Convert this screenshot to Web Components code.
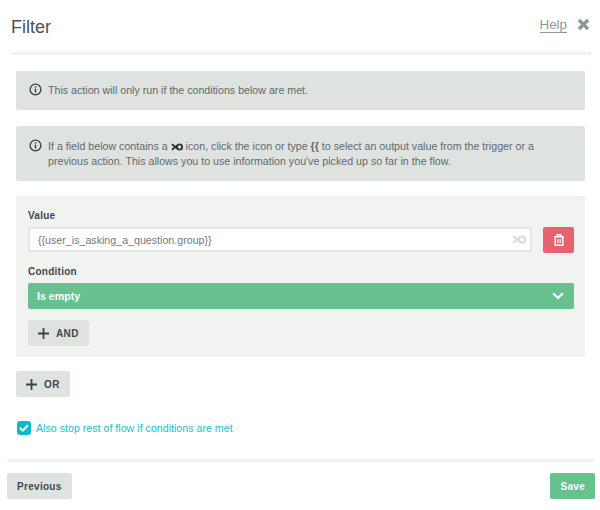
<!DOCTYPE html>
<html>
<head>
<meta charset="utf-8">
<style>
  html, body { margin: 0; background: #fff; }
  body { font-family: "Liberation Sans", Arial, sans-serif; color: #4a5157; }
</style>
</head>
<body>
<filter-dialog></filter-dialog>

<script>
// small shared icons
const loopIcon = (color, w, h) => `<svg width="${w}" height="${h}" viewBox="0 0 14 9" style="display:block"><path d="M1 1.2 L5.2 4.5 L1 7.8" fill="none" stroke="${color}" stroke-width="2.2"/><path d="M5.2 4.5 L7.5 2.6" fill="none" stroke="${color}" stroke-width="2.2"/><path d="M5.2 4.5 L7.5 6.4" fill="none" stroke="${color}" stroke-width="2.2"/><circle cx="10" cy="4.5" r="3" fill="none" stroke="${color}" stroke-width="2.2"/></svg>`;
const infoIcon = `<svg width="13" height="13" viewBox="0 0 13 13" style="display:block"><circle cx="6.5" cy="6.5" r="5.4" fill="none" stroke="#3b4248" stroke-width="1.3"/><rect x="5.8" y="5.6" width="1.4" height="4" fill="#3b4248"/><rect x="5.8" y="3.2" width="1.4" height="1.4" fill="#3b4248"/></svg>`;
const plusIcon = `<svg width="11" height="11" viewBox="0 0 11 11" style="display:block"><path d="M5.5 0 V11 M0 5.5 H11" stroke="#3b4248" stroke-width="1.8" fill="none"/></svg>`;

class InfoBox extends HTMLElement {
  constructor() {
    super();
    this.attachShadow({ mode: 'open' });
    this.shadowRoot.innerHTML = `
      <style>
        :host {
          display: flex;
          align-items: flex-start;
          background-color: #dfe3e0;
          border-radius: 2px;
          padding: 12px 40px 12px 13px;
          font-size: 10.66px;
          line-height: 15px;
          color: #62696e;
        }
        .icon { flex: none; width: 19px; }
      </style>
      <div class="icon">${infoIcon}</div>
      <div><slot></slot></div>
    `;
  }
}

class AddButton extends HTMLElement {
  constructor() {
    super();
    this.attachShadow({ mode: 'open' });
    this.shadowRoot.innerHTML = `
      <style>
        :host {
          display: inline-flex;
          align-items: center;
          gap: 7px;
          height: 26px;
          padding: 0 10px;
          background-color: #dfe3e0;
          border-radius: 2px;
          font-size: 10px;
          font-weight: bold;
          letter-spacing: .4px;
          color: #41484e;
        }
      </style>
      ${plusIcon}<slot></slot>
    `;
  }
}

class ActionButton extends HTMLElement {
  constructor() {
    super();
    this.attachShadow({ mode: 'open' });
    this.shadowRoot.innerHTML = `
      <style>
        :host {
          display: inline-flex;
          align-items: center;
          justify-content: center;
          height: 26px;
          padding: 0 10px;
          background-color: #dfe3e0;
          border-radius: 2px;
          font-size: 10px;
          font-weight: bold;
          letter-spacing: .3px;
          color: #41484e;
        }
        :host([primary]) { background-color: #67c18e; color: #fff; }
      </style>
      <slot></slot>
    `;
  }
}

class ConditionRow extends HTMLElement {
  constructor() {
    super();
    this.attachShadow({ mode: 'open' });
    this.shadowRoot.innerHTML = `
      <style>
        :host {
          display: block;
          background-color: #f1f3f1;
          padding: 14px 11px 11px 12px;
        }
        label { display: block; font-size: 10px; font-weight: bold; letter-spacing: .25px; line-height: 12px; color: #41484e; }
        .value-row { display: flex; gap: 11px; margin-top: 5px; }
        .input {
          flex: 1;
          box-sizing: border-box;
          height: 25px;
          display: flex;
          align-items: center;
          justify-content: space-between;
          background: #fff;
          border: 2px solid #e2e5e2;
          border-radius: 2px;
          padding: 0 4px 0 8px;
          font-size: 10.66px;
          color: #73797e;
        }
        .trash {
          flex: none;
          width: 31px;
          height: 26px;
          display: flex;
          align-items: center;
          justify-content: center;
          background: #e9616f;
          border-radius: 2px;
        }
        .cond { margin-top: 13px; }
        .select {
          height: 26px;
          margin-top: 5px;
          display: flex;
          align-items: center;
          justify-content: space-between;
          background: #67c18e;
          border-radius: 2px;
          padding: 0 10px 0 9px;
          font-size: 10.66px;
          font-weight: bold;
          color: #fff;
        }
        add-button { margin-top: 11px; }
      </style>
      <label>Value</label>
      <div class="value-row">
        <div class="input">
          <span>{{user_is_asking_a_question.group}}</span>
          ${loopIcon('#d9dcd9', 14, 9)}
        </div>
        <div class="trash">
          <svg width="10" height="12" viewBox="0 0 10 12" style="display:block">
            <path d="M3.2 2 V.7 H6.8 V2 M0 2.6 H10 M1.2 2.8 V11.3 H8.8 V2.8 Z" fill="none" stroke="#fff" stroke-width="1.4"/>
            <path d="M3.8 5 V9 M6.2 5 V9" stroke="#fff" stroke-width="1.2"/>
          </svg>
        </div>
      </div>
      <label class="cond">Condition</label>
      <div class="select">
        <span>Is empty</span>
        <svg width="12" height="8" viewBox="0 0 12 8" style="display:block"><path d="M1.2 1.4 L6 6 L10.8 1.4" fill="none" stroke="#fff" stroke-width="2.2"/></svg>
      </div>
      <add-button>AND</add-button>
    `;
  }
}

class StopCheck extends HTMLElement {
  constructor() {
    super();
    this.attachShadow({ mode: 'open' });
    this.shadowRoot.innerHTML = `
      <style>
        :host {
          display: flex;
          align-items: center;
          gap: 5px;
          font-size: 10.66px;
          color: #1fbcd2;
        }
        .box {
          flex: none;
          width: 14px;
          height: 14px;
          display: flex;
          align-items: center;
          justify-content: center;
          background: #11b5cf;
          border-radius: 3px;
        }
      </style>
      <div class="box">
        <svg width="10" height="8" viewBox="0 0 10 8" style="display:block"><path d="M1 4 L3.8 6.6 L9 1.2" fill="none" stroke="#fff" stroke-width="2"/></svg>
      </div>
      <slot></slot>
    `;
  }
}

class FilterDialog extends HTMLElement {
  constructor() {
    super();
    this.attachShadow({ mode: 'open' });
    this.shadowRoot.innerHTML = `
      <style>
        :host { display: block; width: 600px; height: 510px; box-sizing: border-box; padding-top: 17px; overflow: hidden; }
        header {
          display: flex;
          align-items: flex-start;
          justify-content: space-between;
          margin: 0 9px 0 11px;
          height: 35px;
          border-bottom: 3px solid #f1f2f1;
        }
        h1 { margin: 0; font-size: 18px; font-weight: normal; line-height: 21px; color: #4a5157; }
        .tools { display: flex; align-items: flex-start; gap: 10px; }
        .help { font-size: 13.33px; line-height: 15px; color: #8b9a94; border-bottom: 1px solid #8b9a94; }
        .close { margin-top: 1px; margin-right: 1px; }
        main { padding: 16px 15px 0 16px; display: flex; flex-direction: column; }
        info-box + info-box { margin-top: 16px; padding-top: 13px; }
        .line { display: block; height: 15px; white-space: nowrap; }
        .loop { display: inline-block; vertical-align: -1px; }
        condition-row { margin-top: 15px; }
        .or { margin-top: 14px; align-self: flex-start; }
        stop-check { margin-top: 24px; margin-left: 1px; }
        footer {
          margin: 24px 5px 0 7px;
          padding-top: 11px;
          border-top: 3px solid #f1f2f1;
          display: flex;
          justify-content: space-between;
        }
      </style>
      <header>
        <h1>Filter</h1>
        <div class="tools">
          <span class="help">Help</span>
          <svg class="close" width="13" height="13" viewBox="0 0 13 13" style="display:block"><path d="M2 2 L11 11 M11 2 L2 11" stroke="#8b9a94" stroke-width="3.4" fill="none"/></svg>
        </div>
      </header>
      <main>
        <info-box>This action will only run if the conditions below are met.</info-box>
        <info-box>
          <span class="line">If a field below contains a <span class="loop">${loopIcon('#2f363b', 12, 8)}</span> icon, click the icon or type <b>{{</b> to select an output value from the trigger or a</span>
          <span class="line">previous action. This allows you to use information you've picked up so far in the flow.</span>
        </info-box>
        <condition-row></condition-row>
        <add-button class="or">OR</add-button>
        <stop-check>Also stop rest of flow if conditions are met</stop-check>
      </main>
      <footer>
        <action-button>Previous</action-button>
        <action-button primary>Save</action-button>
      </footer>
    `;
  }
}

customElements.define('info-box', InfoBox);
customElements.define('add-button', AddButton);
customElements.define('action-button', ActionButton);
customElements.define('condition-row', ConditionRow);
customElements.define('stop-check', StopCheck);
customElements.define('filter-dialog', FilterDialog);
</script>
</body>
</html>
